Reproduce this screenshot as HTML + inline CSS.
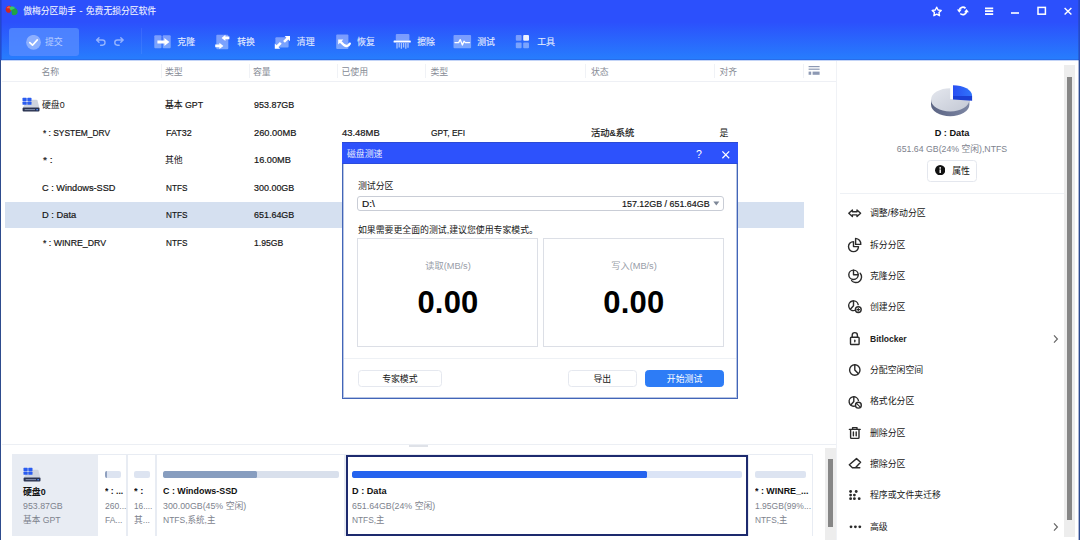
<!DOCTYPE html>
<html lang="zh-CN">
<head>
<meta charset="utf-8">
<title>傲梅分区助手 - 免费无损分区软件</title>
<style>
*{box-sizing:border-box;margin:0;padding:0}
html,body{width:1080px;height:540px;overflow:hidden;background:#fff}
body{position:relative;font-family:"Liberation Sans","Noto Sans CJK SC",sans-serif;font-size:8.9px;color:#161616}
.abs{position:absolute}
.t{position:absolute;white-space:nowrap;line-height:12px;height:12px;transform-origin:0 50%}
#hdr{position:absolute;left:0;top:0;width:1080px;height:60px;background:linear-gradient(#2c50fc 0px,#2c50fc 22px,#277cfd 58.5px,#2865e2 60px)}
#hdr .t{color:#fff}
.tb{opacity:.88;-webkit-text-stroke:.12px #fff}
#frameL{position:absolute;left:0;top:0;width:1px;height:540px;background:linear-gradient(#2444cc 0,#2450cc 60px,#2e4c8e 60px)}
#frameL2{position:absolute;left:1px;top:0;width:1px;height:60px;background:rgba(30,60,200,.45)}
#frameR{position:absolute;left:1079px;top:0;width:1px;height:540px;background:linear-gradient(#2444cc 0,#2450cc 60px,#2e4c8e 60px)}
#frameR2{position:absolute;left:1078px;top:0;width:1px;height:540px;background:rgba(40,66,150,.38)}
.colsep{position:absolute;top:64px;width:1px;height:14px;background:#f0f2f6}
.ch{color:#878c96;-webkit-text-stroke:0}
.gray{color:#7d828d}
.b{font-weight:bold;-webkit-text-stroke:0}
.l{font-size:9.6px;-webkit-text-stroke:.2px currentColor}
.mi{position:absolute;left:848px;width:14px;height:14px}
.cell{position:absolute;top:454.5px;height:81px;background:#fff}
.bar{position:absolute;top:471px;height:7.4px;border-radius:2px;background:#dde4f1;overflow:hidden}
.bar i{position:absolute;left:0;top:0;bottom:0;display:block}
.btn{position:absolute;border:1px solid #e5e8ef;border-radius:3.5px;background:#fff;text-align:center}
</style>
</head>
<body>
<!-- ===== header ===== -->
<div id="hdr">
  <!-- logo -->
  <svg class="abs" style="left:4px;top:3px" width="16" height="14" viewBox="4 3 16 14">
    <path d="M12.2 6.2 C14 5.4 16 6.4 16.4 8.2 L13.6 9.6 Z" fill="#1f6fe6"/>
    <path d="M5.6 9.4 C5.4 6.6 8 5.2 10.4 5.8 L11.8 9.4 L10 12.6 C8 13.2 5.8 12.2 5.6 9.4 Z" fill="#d4281f"/>
    <path d="M6.6 8.2 C7 6.8 8.4 6.2 9.8 6.4 L10.4 8.2 C9 8 7.6 8.4 6.6 8.2 Z" fill="#f4574a"/>
    <path d="M9.4 8 C10.4 6.2 13.6 6 15 8.2 L13.4 10.6 L10.8 10.4 Z" fill="#3fca5e"/>
    <path d="M11.4 10 L15.2 8.2 C17.8 9.2 18.4 12.4 16.6 14.2 C15.2 15.6 13.2 15.4 12 14.8 Z" fill="#1fa345"/>
  </svg>
  <div class="t" style="left:23.2px;top:4.5px;font-size:8.8px;opacity:.92;-webkit-text-stroke:.1px #fff;word-spacing:1px">傲梅分区助手 - 免费无损分区软件</div>

  <!-- window controls -->
  <svg class="abs" style="left:930px;top:5px" width="146" height="13" viewBox="0 0 146 13" fill="none" stroke="#fff" stroke-width="1.4">
    <path d="M6.7 2.2 L8.1 5 L11.2 5.4 L9 7.6 L9.5 10.7 L6.7 9.2 L3.9 10.7 L4.4 7.6 L2.2 5.4 L5.3 5 Z" stroke-linejoin="round"/>
    <path d="M29.3 4.9 A3.65 3.65 0 0 1 35.5 3.3 M36.5 6.9 A3.65 3.65 0 0 1 30.3 8.5" stroke-width="1.8"/>
    <path d="M26.9 4.5 H31.7 L29.3 7.7 Z M34.1 7.3 H38.9 L36.5 4.1 Z" fill="#fff" stroke="none"/>
    <path d="M55 3.3 H63.2 M55 6.2 H63.2 M55 9.1 H63.2" stroke-width="1.7"/>
    <path d="M81 8 H89" stroke-width="1.6"/>
    <rect x="108" y="2.4" width="7.4" height="6.8" stroke-width="1.5"/>
    <path d="M134.6 3 L141.4 9.6 M141.4 3 L134.6 9.6" stroke-width="1.4"/>
  </svg>

  <!-- submit button -->
  <div class="abs" style="left:9px;top:28px;width:70px;height:28px;border-radius:3px;background:rgba(84,138,255,.82)"></div>
  <svg class="abs" style="left:26px;top:34.5px" width="15" height="15" viewBox="0 0 15 15">
    <circle cx="7.5" cy="7.3" r="7.4" fill="rgba(255,255,255,.36)"/>
    <path d="M3.8 7.6 L6.5 10.2 L11.3 4.9" fill="none" stroke="#fff" stroke-width="1.7" stroke-linecap="round" stroke-linejoin="round"/>
  </svg>
  <div class="t" style="left:45px;top:36px;opacity:.6">提交</div>

  <!-- undo / redo -->
  <svg class="abs" style="left:94px;top:36px" width="32" height="11" viewBox="0 0 32 11" fill="none" stroke="rgba(255,255,255,.5)" stroke-width="1.4" stroke-linecap="round" stroke-linejoin="round">
    <path d="M5 1.8 L2.6 4 L5 6.2 M3 4 H8.4 A2.6 2.6 0 0 1 8.4 9.2 H6.6"/>
    <path d="M26.8 1.8 L29.2 4 L26.8 6.2 M28.8 4 H23.4 A2.6 2.6 0 0 0 23.4 9.2 H25.2"/>
  </svg>
  <div class="abs" style="left:141px;top:28px;width:1px;height:26px;background:rgba(255,255,255,.075)"></div>

  <!-- toolbar icons -->
  <svg class="abs" style="left:150px;top:30px" width="390" height="24" viewBox="150 30 390 24">
    <!-- clone -->
    <rect x="154.3" y="35.3" width="7.2" height="13" rx="1" fill="rgba(255,255,255,.38)"/>
    <rect x="162.7" y="35.3" width="8" height="13" rx="1" fill="rgba(255,255,255,.38)"/>
    <path d="M157.4 40.6 H164.4 V38 L169.4 42 L164.4 46 V43.4 H157.4 Z" fill="#fff"/>
    <!-- convert -->
    <rect x="216.3" y="34.8" width="12" height="14.4" rx="1" fill="rgba(255,255,255,.38)"/>
    <path d="M229.4 36.6 H225.4 V34.8 L221.6 37.9 L225.4 41 V39.2 H229.4 Z" fill="#fff"/>
    <path d="M215.2 44.6 H219.4 V42.8 L223.4 45.9 L219.4 49 V47.2 H215.2 Z" fill="#fff"/>
    <!-- clean -->
    <rect x="275.4" y="37.2" width="13.2" height="10.2" rx="1" fill="rgba(255,255,255,.38)"/>
    <path d="M284.6 35.9 H290 V41.3 L288.2 39.5 L284.9 42.8 L283.1 41 L286.4 37.7 Z" fill="#fff"/>
    <path d="M280.2 48.8 H274.8 V43.4 L276.6 45.2 L279.9 41.9 L281.7 43.7 L278.4 47 Z" fill="#fff"/>
    <!-- restore -->
    <rect x="336.2" y="34.5" width="12.2" height="14.4" rx="1" fill="rgba(255,255,255,.38)"/>
    <path d="M338.2 39.4 H343.4 L338.2 44.6 Z" fill="#fff"/><path d="M340.6 41.8 L344 45 Q347.6 47.6 349.8 43.6" fill="none" stroke="#fff" stroke-width="2.3" stroke-linecap="round"/>
    <!-- tb-wipe -->
    <rect x="395.8" y="33.9" width="13.6" height="6.6" rx="1" fill="rgba(255,255,255,.38)"/>
    <rect x="393.6" y="40.6" width="17.2" height="2" rx=".6" fill="#fff"/>
    <path d="M397 43 V48.4 M399.2 43 V47.4 M401.4 43 V48.8 M403.6 43 V47.4 M405.8 43 V48.8 M408 43 V47.8" stroke="rgba(255,255,255,.6)" stroke-width="1.3" fill="none"/>
    <!-- tb-test -->
    <rect x="453.5" y="35" width="17.6" height="13.3" rx="1" fill="rgba(255,255,255,.38)"/>
    <path d="M455 42.6 H458.6 L460.2 39.6 L462.4 45 L464 41.2 L465.4 42.6 H469.6" fill="none" stroke="#fff" stroke-width="1.3" stroke-linejoin="round" stroke-linecap="round"/>
    <!-- tb-tools -->
    <rect x="515.8" y="35" width="5.8" height="5.8" rx="1" fill="rgba(255,255,255,.38)"/>
    <rect x="523.2" y="35" width="5.8" height="5.8" rx="1" fill="rgba(255,255,255,.9)"/>
    <rect x="515.8" y="42.4" width="5.8" height="5.8" rx="1" fill="rgba(255,255,255,.38)"/>
    <rect x="523.2" y="42.4" width="5.8" height="5.8" rx="1" fill="rgba(255,255,255,.38)"/>
  </svg>
  <div class="t tb" style="left:177.3px;top:36px">克隆</div>
  <div class="t tb" style="left:237.2px;top:36px">转换</div>
  <div class="t tb" style="left:296.8px;top:36px">清理</div>
  <div class="t tb" style="left:357.1px;top:36px">恢复</div>
  <div class="t tb" style="left:417.2px;top:36px">擦除</div>
  <div class="t tb" style="left:477.2px;top:36px">测试</div>
  <div class="t tb" style="left:537.2px;top:36px">工具</div>
</div>
<div class="abs" style="left:0;top:60px;width:1080px;height:1px;background:#c3d4f7"></div>
<div id="frameL"></div><div id="frameL2"></div>
<div id="frameR"></div><div id="frameR2"></div>

<!-- ===== table header ===== -->
<div class="t ch" style="left:41.4px;top:65.7px">名称</div>
<div class="t ch" style="left:165px;top:65.7px">类型</div>
<div class="t ch" style="left:253px;top:65.7px">容量</div>
<div class="t ch" style="left:341.5px;top:65.7px">已使用</div>
<div class="t ch" style="left:430.5px;top:65.7px">类型</div>
<div class="t ch" style="left:591px;top:65.7px">状态</div>
<div class="t ch" style="left:719.5px;top:65.7px">对齐</div>
<div class="colsep" style="left:161px"></div>
<div class="colsep" style="left:249px"></div>
<div class="colsep" style="left:337px"></div>
<div class="colsep" style="left:425px"></div>
<div class="colsep" style="left:585px"></div>
<div class="colsep" style="left:714px"></div>
<div class="colsep" style="left:803px"></div>
<svg class="abs" style="left:808px;top:65px" width="12" height="11" viewBox="0 0 12 11" fill="#8d99b3">
  <rect x="0.6" y="1" width="11" height="1.2"/><rect x="0.6" y="3.6" width="11" height="1.2"/>
  <rect x="0.6" y="6.6" width="2.6" height="3.2"/><rect x="4.6" y="6.6" width="7" height="3.2"/>
</svg>
<div class="abs" style="left:2px;top:81px;width:834px;height:1px;background:#eef0f5"></div>
<div class="abs" style="left:836px;top:61px;width:1px;height:479px;background:#f0f2f6"></div>

<!-- ===== table rows ===== -->
<div class="abs" style="left:5px;top:202px;width:799px;height:26px;background:#d5e0f0"></div>
<svg class="abs" style="left:21.5px;top:97px" width="18" height="15" viewBox="0 0 18 15">
  <path d="M9.2 2.8 H14.4 Q15.2 2.8 15.5 3.5 L17.4 10.8 H0.8 L3.4 6 Z" fill="#cfd4df"/>
  <rect x="0.6" y="10.4" width="16.9" height="4.2" rx="1" fill="#2a3350"/>
  <rect x="2.6" y="12.2" width="10.4" height="0.9" fill="#8d97b4"/>
  <rect x="14.4" y="12" width="1.5" height="1.3" fill="#4f8bff"/>
  <rect x="0.5" y="0.8" width="4.2" height="3.2" rx="0.6" fill="#2a5cf0"/>
  <rect x="5.3" y="0.8" width="4.2" height="3.2" rx="0.6" fill="#2a5cf0"/>
  <rect x="0.5" y="4.6" width="4.2" height="3.2" rx="0.6" fill="#2a5cf0"/>
  <rect x="5.3" y="4.6" width="4.2" height="3.2" rx="0.6" fill="#2a5cf0"/>
</svg>
<div class="t" style="left:42px;top:99.4px">硬盘0</div>
<div class="t l" style="left:165px;top:99.4px;transform:scaleX(0.916)">基本 GPT</div>
<div class="t l" style="left:254.2px;top:99.4px;transform:scaleX(0.932)">953.87GB</div>

<div class="t l" style="left:42.6px;top:126.9px;transform:scaleX(0.875)">* : SYSTEM_DRV</div>
<div class="t l" style="left:165.5px;top:126.9px;transform:scaleX(0.932)">FAT32</div>
<div class="t l" style="left:254.2px;top:126.9px;transform:scaleX(0.969)">260.00MB</div>
<div class="t l" style="left:341.5px;top:126.9px;transform:scaleX(0.982)">43.48MB</div>
<div class="t l" style="left:430.5px;top:126.9px;transform:scaleX(0.874)">GPT, EFI</div>
<div class="t l" style="left:591px;top:126.9px;transform:scaleX(0.969)">活动&amp;系统</div>
<div class="t" style="left:719.5px;top:126.9px">是</div>

<div class="t l" style="left:42.6px;top:154.4px;transform:scaleX(1.069)">* :</div>
<div class="t" style="left:165px;top:154.4px">其他</div>
<div class="t l" style="left:254.2px;top:154.4px;transform:scaleX(0.963)">16.00MB</div>

<div class="t l" style="left:42.4px;top:181.9px;transform:scaleX(0.957)">C : Windows-SSD</div>
<div class="t l" style="left:165.5px;top:181.9px;transform:scaleX(0.854)">NTFS</div>
<div class="t l" style="left:254.2px;top:181.9px;transform:scaleX(0.932)">300.00GB</div>

<div class="t l" style="left:42.4px;top:209.4px;transform:scaleX(0.972)">D : Data</div>
<div class="t l" style="left:165.5px;top:209.4px;transform:scaleX(0.854)">NTFS</div>
<div class="t l" style="left:254.2px;top:209.4px;transform:scaleX(0.932)">651.64GB</div>

<div class="t l" style="left:42.6px;top:236.9px;transform:scaleX(0.911)">* : WINRE_DRV</div>
<div class="t l" style="left:165.5px;top:236.9px;transform:scaleX(0.854)">NTFS</div>
<div class="t l" style="left:254.2px;top:236.9px;transform:scaleX(0.897)">1.95GB</div>

<!-- ===== right panel ===== -->
<svg class="abs" style="left:928px;top:82px" width="48" height="38" viewBox="928 82 48 38">
  <defs>
    <linearGradient id="pg1" x1="0" y1="0" x2="1" y2="1"><stop offset="0" stop-color="#e4e7ee"/><stop offset="1" stop-color="#c3c8d4"/></linearGradient>
    <linearGradient id="pg2" x1="0" y1="0" x2="1" y2="0"><stop offset="0" stop-color="#5b6483"/><stop offset="1" stop-color="#7c86a3"/></linearGradient>
    <linearGradient id="pg3" x1="0" y1="0" x2="1" y2="0"><stop offset="0" stop-color="#2a4ff2"/><stop offset="1" stop-color="#2f74fb"/></linearGradient>
  </defs>
  <path d="M931 99.8 V104.6 A19.2 11.6 0 0 0 969.4 104.6 V99.8 Z" fill="url(#pg2)"/>
  <path d="M950.2 88.2 A19.2 11.6 0 1 0 969.4 99.8 H950.2 Z" fill="url(#pg1)"/>
  <path d="M953 95.4 V99.6 L972.1 100.8 V95.8 Z" fill="#1b3fd4"/>
  <path d="M953 85.2 A19.1 10.8 0 0 1 972.1 96 H953 Z" fill="url(#pg3)"/>
</svg>
<div class="t b" style="left:892px;top:127.4px;width:120px;text-align:center;font-size:9.2px;color:#111">D : Data</div>
<div class="t gray" style="left:872px;top:143px;width:160px;text-align:center;transform-origin:50% 50%;transform:scaleX(.986)">651.64 GB(24% 空闲),NTFS</div>
<div class="btn" style="left:927px;top:160px;width:50px;height:21.5px;border-color:#e4e7ee"></div>
<svg class="abs" style="left:934.8px;top:165px" width="10.4" height="10.4" viewBox="-0.2 -0.2 10.4 10.4"><circle cx="5" cy="5" r="5.15" fill="#111"/><rect x="4.3" y="4.2" width="1.4" height="3.6" fill="#fff"/><circle cx="5" cy="2.7" r="0.85" fill="#fff"/></svg>
<div class="t" style="left:952.2px;top:165.1px">属性</div>
<div class="abs" style="left:840px;top:193px;width:224px;height:1px;background:#eef1f5"></div>

<svg class="abs" style="left:846px;top:203px" width="18" height="332" viewBox="846 203 18 332" fill="none" stroke="#2b2b2b" stroke-width="1.4" stroke-linejoin="round" stroke-linecap="round">
  <!-- mi-resize -->
  <path d="M852.4 210 L848.8 213.3 L852.4 216.6 V214.9 H857 V216.6 L860.6 213.3 L857 210 V211.7 H852.4 Z"/>
  <!-- mi-split -->
  <path d="M853.5 241.6 A5 5 0 1 0 858.5 246.6 H853.5 Z"/><path d="M855.6 238.4 V244.4 H860.8 A5.6 5.6 0 0 0 855.6 238.4 Z"/>
  <!-- mi-clone -->
  <circle cx="853.5" cy="274.8" r="4.7"/><path d="M853.5 270.1 V274.8 H858.2"/><path d="M851.6 280.6 A5 5 0 0 0 860.2 273.2"/>
  <!-- mi-create -->
  <path d="M858.2 304.6 A4.8 4.8 0 1 0 854.6 310.4"/><path d="M853.5 300.9 V305.7 L850.4 309.2"/><circle cx="858.3" cy="309.6" r="2.9"/><path d="M858.3 308.2 V311 M856.9 309.6 H859.7" stroke-width="1.1"/>
  <!-- mi-bitlocker -->
  <rect x="850.5" y="337.3" width="8.6" height="7.2" rx="0.8"/><path d="M852.2 337.1 V335.2 A2.6 2.6 0 0 1 857.4 335.2 V337.1"/><path d="M854.8 340.2 V341.8"/>
  <!-- mi-allocate -->
  <circle cx="854.8" cy="370" r="5.2"/><path d="M854.8 364.8 V370 L858.2 373.6"/>
  <!-- mi-format -->
  <path d="M858.4 400.4 A4.7 4.7 0 1 0 854.8 406.1"/><path d="M853.8 396.9 V401.5 L850.8 405"/><circle cx="858.4" cy="405.2" r="2.9"/><path d="M856.5 403.3 L860.3 407.1" stroke-width="1.1"/>
  <!-- mi-delete -->
  <path d="M849.4 429.4 H860.2 M852.6 429.2 V427.6 H857 V429.2 M850.6 429.6 V437.6 A0.8 0.8 0 0 0 851.4 438.4 H858.2 A0.8 0.8 0 0 0 859 437.6 V429.6"/><path d="M853.4 432 V435.8 M856.2 432 V435.8"/>
  <!-- mi-wipe -->
  <path d="M856.5 458.6 L860.6 462.2 L855.4 467.8 H852.4 L849.3 464.8 Z M855 467.8 H859.8"/>
  <!-- mi-migrate -->
  <g fill="#2b2b2b" stroke="none"><circle cx="850.6" cy="491.5" r="1.42"/><circle cx="856.2" cy="491.5" r="1.42"/><circle cx="850.6" cy="495.1" r="1.42"/><circle cx="854.4" cy="495.1" r="1.42"/><circle cx="850.6" cy="498.7" r="1.42"/><circle cx="854.4" cy="498.7" r="1.42"/><circle cx="859.2" cy="498.7" r="1.42"/></g>
  <!-- mi-advanced -->
  <g fill="#2b2b2b" stroke="none"><circle cx="851" cy="526.8" r="1.42"/><circle cx="855.4" cy="526.8" r="1.42"/><circle cx="859.8" cy="526.8" r="1.42"/></g>
</svg>
<div class="t" style="left:870px;top:207.2px">调整/移动分区</div>
<div class="t" style="left:870px;top:238.6px">拆分分区</div>
<div class="t" style="left:870px;top:270px">克隆分区</div>
<div class="t" style="left:870px;top:301.3px">创建分区</div>
<div class="t b" style="left:870.4px;top:332.7px;font-size:8.8px;color:#222;transform:scaleX(0.972)">Bitlocker</div>
<div class="t" style="left:870px;top:364px">分配空闲空间</div>
<div class="t" style="left:870px;top:395.4px">格式化分区</div>
<div class="t" style="left:870px;top:426.7px">删除分区</div>
<div class="t" style="left:870px;top:458.1px">擦除分区</div>
<div class="t" style="left:870px;top:489.4px">程序或文件夹迁移</div>
<div class="t" style="left:870px;top:520.8px">高级</div>
<svg class="abs" style="left:1052px;top:334px" width="7" height="10" viewBox="0 0 7 10" fill="none" stroke="#666" stroke-width="1.2"><path d="M2 1.4 L5.4 5 L2 8.6"/></svg>
<svg class="abs" style="left:1052px;top:521.6px" width="7" height="10" viewBox="0 0 7 10" fill="none" stroke="#666" stroke-width="1.2"><path d="M2 1.4 L5.4 5 L2 8.6"/></svg>
<!-- scrollbars -->
<div class="abs" style="left:1064px;top:64.5px;width:11px;height:472px;background:#ededed"></div>
<div class="abs" style="left:1067px;top:76.5px;width:5.4px;height:443.5px;background:#868686"></div>
<div class="abs" style="left:824.5px;top:447.5px;width:11.3px;height:92.5px;background:#ededed"></div>
<div class="abs" style="left:827.5px;top:459px;width:5.2px;height:67.5px;background:#868686"></div>

<!-- ===== disk map ===== -->
<div class="abs" style="left:2px;top:444px;width:834px;height:1px;background:#eceff4"></div>
<div class="abs" style="left:409px;top:445px;width:19px;height:1.5px;background:#dfe2e8"></div>
<div class="abs" style="left:12px;top:454px;width:800.8px;height:82px;background:#e8ecf3"></div>
<svg class="abs" style="left:22.5px;top:467px" width="18" height="15" viewBox="0 0 18 15">
  <path d="M9.2 2.8 H14.4 Q15.2 2.8 15.5 3.5 L17.4 10.8 H0.8 L3.4 6 Z" fill="#cfd4df"/>
  <rect x="0.6" y="10.4" width="16.9" height="4.2" rx="1" fill="#2a3350"/>
  <rect x="2.6" y="12.2" width="10.4" height="0.9" fill="#8d97b4"/>
  <rect x="14.4" y="12" width="1.5" height="1.3" fill="#4f8bff"/>
  <rect x="0.5" y="0.8" width="4.2" height="3.2" rx="0.6" fill="#2a5cf0"/>
  <rect x="5.3" y="0.8" width="4.2" height="3.2" rx="0.6" fill="#2a5cf0"/>
  <rect x="0.5" y="4.6" width="4.2" height="3.2" rx="0.6" fill="#2a5cf0"/>
  <rect x="5.3" y="4.6" width="4.2" height="3.2" rx="0.6" fill="#2a5cf0"/>
</svg>
<div class="t b" style="left:23px;top:486.3px;color:#111">硬盘0</div>
<div class="t gray" style="left:23px;top:500.3px;transform:scaleX(0.993)">953.87GB</div>
<div class="t gray" style="left:23px;top:514px;transform:scaleX(0.977)">基本 GPT</div>

<div class="cell" style="left:98.2px;width:28.3px"></div>
<div class="cell" style="left:128.3px;width:27px"></div>
<div class="cell" style="left:157px;width:186.5px"></div>
<div class="cell" style="left:345.5px;width:402px;border:2px solid #1d2a6e"></div>
<div class="cell" style="left:748.5px;width:63.5px"></div>

<div class="bar" style="left:104.6px;width:16.4px"><i style="width:2px;background:#8fa0bf"></i></div>
<div class="bar" style="left:133.7px;width:16.4px"></div>
<div class="bar" style="left:162.6px;width:176px;background:#d9e0ec"><i style="width:94.4px;background:#879dbf;border-radius:1.5px"></i></div>
<div class="bar" style="left:352px;width:389.8px;background:#dbe4f6"><i style="width:295px;background:#2563ee;border-radius:1.5px"></i></div>
<div class="bar" style="left:754.6px;width:51.4px"></div>

<div class="t b" style="left:104.6px;top:485.3px;color:#111;transform:scaleX(0.971)">* : ...</div>
<div class="t gray" style="left:104.6px;top:500.3px;transform:scaleX(0.963)">260...</div>
<div class="t gray" style="left:104.6px;top:514px;transform:scaleX(0.953)">FA...</div>
<div class="t b" style="left:133.7px;top:485.3px;color:#111;transform:scaleX(1.059)">* :</div>
<div class="t gray" style="left:133.7px;top:500.3px;transform:scaleX(0.927)">16....</div>
<div class="t gray" style="left:133.7px;top:514px;transform:scaleX(0.983)">其...</div>
<div class="t b" style="left:162.6px;top:485.3px;color:#111;transform:scaleX(1.002)">C : Windows-SSD</div>
<div class="t gray" style="left:162.6px;top:500.3px;transform:scaleX(0.992)">300.00GB(45% 空闲)</div>
<div class="t gray" style="left:162.6px;top:514px;transform:scaleX(0.959)">NTFS,系统,主</div>
<div class="t b" style="left:352px;top:485.3px;color:#111;transform:scaleX(1.031)">D : Data</div>
<div class="t gray" style="left:352px;top:500.3px;transform:scaleX(0.992)">651.64GB(24% 空闲)</div>
<div class="t gray" style="left:352px;top:514px;transform:scaleX(0.939)">NTFS,主</div>
<div class="t b" style="left:754.6px;top:485.3px;color:#111;transform:scaleX(1.003)">* : WINRE_...</div>
<div class="t gray" style="left:754.6px;top:500.3px;transform:scaleX(0.962)">1.95GB(99%...</div>
<div class="t gray" style="left:754.6px;top:514px;transform:scaleX(0.939)">NTFS,主</div>

<!-- ===== dialog ===== -->
<div class="abs" style="left:342px;top:142px;width:396px;height:256.5px;background:#fff;border:1px solid #4265b8;border-top:none;box-shadow:inset 0 0 0 1px #b7c5e4"></div>
<div class="abs" style="left:342px;top:142px;width:396px;height:22px;background:#2d52fc;border-top:1px solid #2b4ad4;border-bottom:1px solid #2b4cdc"></div>
<div class="t" style="left:347px;top:148px;color:#fff;opacity:.9">磁盘测速</div>
<div class="t" style="left:696px;top:148px;color:#fff;font-size:10.5px;width:6px;text-align:center">?</div>
<svg class="abs" style="left:721px;top:149.6px" width="10" height="10" viewBox="0 0 10 10" fill="none" stroke="#fff" stroke-width="1.25"><path d="M1.4 1.4 L8.2 8.2 M8.2 1.4 L1.4 8.2"/></svg>

<div class="t" style="left:358px;top:179.5px">测试分区</div>
<div class="abs" style="left:357.2px;top:196px;width:367px;height:15px;border:1px solid #c9cdd6;border-radius:3px;background:#fff"></div>
<div class="t l" style="left:362.3px;top:197.6px;transform:scaleX(1.044)">D:\</div>
<div class="t l" style="left:621.8px;top:197.6px;transform:scaleX(0.928)">157.12GB / 651.64GB</div>
<svg class="abs" style="left:713.4px;top:201px" width="7" height="5" viewBox="0 0 7 5"><path d="M0.3 0.6 H6.3 L3.3 4.5 Z" fill="#7d8797"/></svg>
<div class="t" style="left:358px;top:224.3px">如果需要更全面的测试,建议您使用专家模式。</div>

<div class="abs" style="left:357px;top:238px;width:181px;height:108.6px;border:1px solid #dcdfe6;background:#fff"></div>
<div class="abs" style="left:543px;top:238px;width:181px;height:108.6px;border:1px solid #dcdfe6;background:#fff"></div>
<div class="t" style="left:358px;top:260.3px;width:180px;text-align:center;color:#979da7;transform-origin:50% 50%;transform:scaleX(1.04)">读取(MB/s)</div>
<div class="t" style="left:543.8px;top:260.3px;width:180px;text-align:center;color:#979da7;transform-origin:50% 50%;transform:scaleX(1.04)">写入(MB/s)</div>
<div class="t b" style="left:358px;top:284.6px;width:180px;height:36px;line-height:36px;text-align:center;font-size:31px;letter-spacing:.2px;color:#000">0.00</div>
<div class="t b" style="left:543.8px;top:284.6px;width:180px;height:36px;line-height:36px;text-align:center;font-size:31px;letter-spacing:.2px;color:#000">0.00</div>

<div class="abs" style="left:344px;top:357.6px;width:392px;height:1px;background:#eef1f5"></div>
<div class="btn" style="left:358.2px;top:370px;width:83.4px;height:17.2px"></div>
<div class="t" style="left:358.2px;top:372.6px;width:83.4px;text-align:center">专家模式</div>
<div class="btn" style="left:568px;top:370px;width:68.6px;height:17.2px"></div>
<div class="t" style="left:568px;top:372.6px;width:68.6px;text-align:center">导出</div>
<div class="btn" style="left:645.2px;top:370px;width:78.8px;height:17.2px;background:#2d7cf6;border-color:#2d7cf6"></div>
<div class="t" style="left:645.2px;top:372.6px;width:78.8px;text-align:center;color:#fff">开始测试</div>

</body>
</html>
